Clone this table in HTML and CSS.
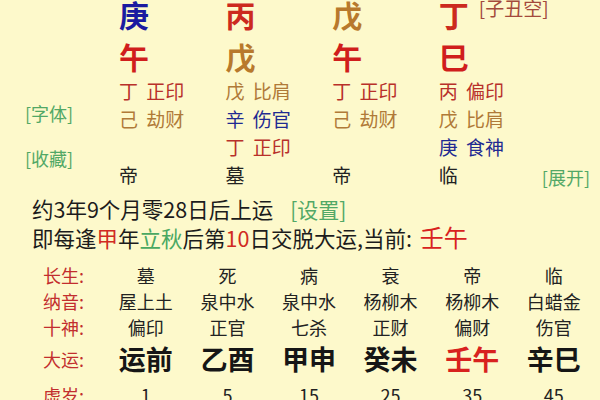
FILE: index.html
```html
<!DOCTYPE html>
<html lang="zh-CN">
<head>
<meta charset="utf-8">
<title>八字排盘</title>
<link rel="stylesheet" href="styles.css">
</head>
<body>
<div class="page">
  <section class="chart">
    <aside class="side">
      <span class="link">[字体]</span>
      <span class="link link-fav">[收藏]</span>
    </aside>
    <div class="pillars">
      <div class="big c-blue">庚</div>
      <div class="big c-red">丙</div>
      <div class="big c-brown">戊</div>
      <div class="big c-red top-last">丁<span class="kong">[子丑空]</span></div>

      <div class="big2 c-red2">午</div>
      <div class="big2 c-brown">戊</div>
      <div class="big2 c-red2">午</div>
      <div class="big2 c-red2">巳</div>

      <div class="hid s-red">丁 正印</div>
      <div class="hid s-brown">戊 比肩</div>
      <div class="hid s-red">丁 正印</div>
      <div class="hid s-red">丙 偏印</div>

      <div class="hid s-brown">己 劫财</div>
      <div class="hid s-blue">辛 伤官</div>
      <div class="hid s-brown">己 劫财</div>
      <div class="hid s-brown">戊 比肩</div>

      <div class="hid"></div>
      <div class="hid s-red">丁 正印</div>
      <div class="hid"></div>
      <div class="hid s-blue">庚 食神</div>

      <div class="hid s-dark">帝</div>
      <div class="hid s-dark">墓</div>
      <div class="hid s-dark">帝</div>
      <div class="hid s-dark">临</div>
    </div>
    <div class="extra">
      <span class="link">[展开]</span>
    </div>
  </section>

  <section class="info">
    <p class="line">约3年9个月零28日后上运<span class="link set">[设置]</span></p>
    <p class="line">即每逢<span class="t-red">甲</span>年<span class="t-green">立秋</span>后第<span class="t-red">10</span>日交脱大运,当前: <span class="cur">壬午</span></p>
  </section>

  <section class="table">
    <div class="lbl">长生:</div>
    <div class="val">墓</div>
    <div class="val">死</div>
    <div class="val">病</div>
    <div class="val">衰</div>
    <div class="val">帝</div>
    <div class="val">临</div>

    <div class="lbl">纳音:</div>
    <div class="val">屋上土</div>
    <div class="val">泉中水</div>
    <div class="val">泉中水</div>
    <div class="val">杨柳木</div>
    <div class="val">杨柳木</div>
    <div class="val">白蜡金</div>

    <div class="lbl">十神:</div>
    <div class="val">偏印</div>
    <div class="val">正官</div>
    <div class="val">七杀</div>
    <div class="val">正财</div>
    <div class="val">偏财</div>
    <div class="val">伤官</div>

    <div class="lbl lbl-dy">大运:</div>
    <div class="val dy">运前</div>
    <div class="val dy">乙酉</div>
    <div class="val dy">甲申</div>
    <div class="val dy">癸未</div>
    <div class="val dy dy-cur">壬午</div>
    <div class="val dy">辛巳</div>

    <div class="lbl lbl-age">虚岁:</div>
    <div class="val age">1</div>
    <div class="val age">5</div>
    <div class="val age">15</div>
    <div class="val age">25</div>
    <div class="val age">35</div>
    <div class="val age">45</div>
  </section>
</div>
</body>
</html>
```

FILE: styles.css
```css
html, body {
  margin: 0;
  padding: 0;
}

body {
  background: #fdf9cb;
  font-family: "Noto Sans CJK SC", "Noto Sans", sans-serif;
  color: #1c1c1c;
  width: 600px;
  height: 400px;
  overflow: hidden;
}

.page {
  width: 600px;
}

/* ---------- top chart ---------- */
.chart {
  display: flex;
  width: 600px;
}

.side {
  width: 119px;
  flex-shrink: 0;
  box-sizing: border-box;
  padding: 103px 0 0 25px;
  display: flex;
  flex-direction: column;
  align-items: flex-start;
}

.link {
  color: #52a866;
  font-size: 18px;
  line-height: 20px;
  white-space: nowrap;
}

.link-fav {
  margin-top: 25px;
}

.pillars {
  display: grid;
  grid-template-columns: repeat(4, 106.6px);
  grid-template-rows: 29px 47px 29px 28px 28px 28px;
  align-items: end;
  flex-shrink: 0;
}

.big {
  font-size: 30px;
  line-height: 29px;
  font-weight: 700;
}

.top-last {
  display: flex;
  align-items: flex-start;
  white-space: nowrap;
  min-width: 0;
}

.kong {
  flex-shrink: 0;
  white-space: nowrap;
  font-size: 19px;
  line-height: 15px;
  font-weight: 400;
  color: #a34a3c;
  margin-left: 10px;
}

.big2 {
  font-size: 30px;
  line-height: 40px;
  font-weight: 700;
}

.hid {
  font-size: 19px;
  line-height: 28px;
  white-space: nowrap;
  word-spacing: 4px;
}

.c-blue { color: #1b1ba0; }
.c-red { color: #cc2a1e; }
.c-red2 { color: #d01e1c; }
.c-brown { color: #b8792c; }

.s-red { color: #b8302a; }
.s-brown { color: #b07a38; }
.s-blue { color: #1f2a92; }
.s-dark { color: #222; }

.extra {
  flex: 1;
  min-width: 0;
  box-sizing: border-box;
  padding: 167px 10px 0 0;
  display: flex;
  justify-content: flex-end;
  align-items: flex-start;
}

.extra .link {
  flex-shrink: 0;
}

/* ---------- info lines ---------- */
.info {
  margin-top: 6px;
  padding-left: 32px;
}

.line {
  margin: 0;
  font-size: 21.5px;
  line-height: 28px;
  white-space: nowrap;
}

.set {
  font-size: 21px;
  margin-left: 17px;
}

.t-red { color: #d02a22; }
.t-green { color: #4aa862; }

.cur {
  color: #d8221e;
  font-size: 24px;
  margin-left: 3px;
}

/* ---------- table ---------- */
.table {
  margin-top: 10px;
  display: grid;
  grid-template-columns: 105px repeat(6, 81.6px);
  grid-template-rows: 26px 26px 26px 38px 34px;
  align-items: center;
}

.lbl {
  padding-left: 43px;
  color: #c22e2e;
  font-size: 18px;
  line-height: 26px;
  white-space: nowrap;
}

.val {
  text-align: center;
  font-size: 18px;
  line-height: 26px;
  color: #222;
  white-space: nowrap;
}

.dy {
  font-size: 27px;
  line-height: 38px;
  font-weight: 700;
  color: #161616;
}

.dy-cur {
  color: #d8221e;
}

.age {
  font-size: 18px;
  line-height: 34px;
}

.lbl-age {
  line-height: 34px;
}
```
